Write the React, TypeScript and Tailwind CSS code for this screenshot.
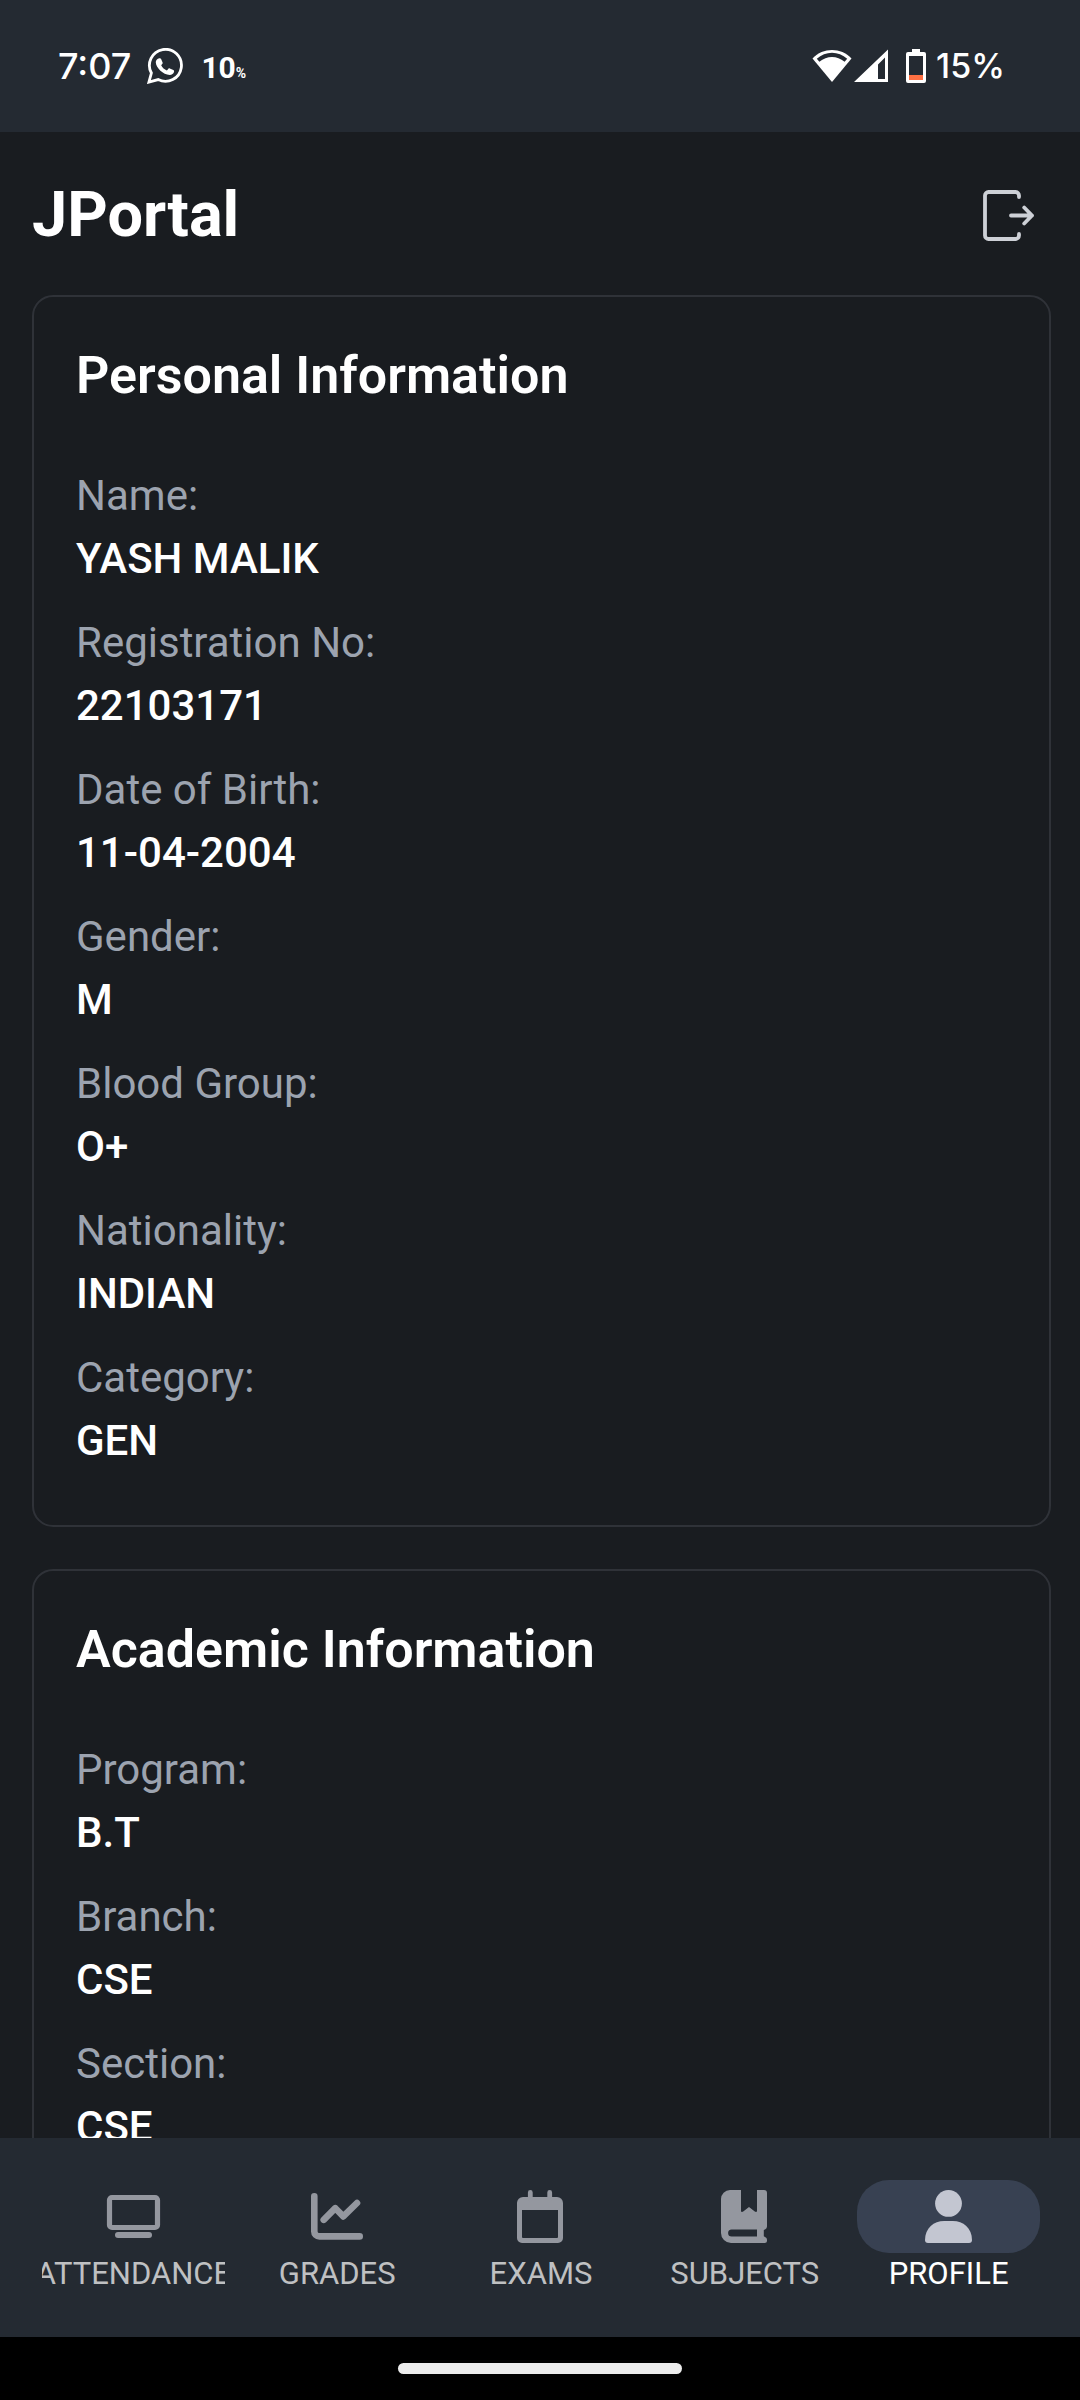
import React from "react";

type Field = { label: string; value: string };

const personal: Field[] = [
  { label: "Name:", value: "YASH MALIK" },
  { label: "Registration No:", value: "22103171" },
  { label: "Date of Birth:", value: "11-04-2004" },
  { label: "Gender:", value: "M" },
  { label: "Blood Group:", value: "O+" },
  { label: "Nationality:", value: "INDIAN" },
  { label: "Category:", value: "GEN" },
];

const academic: Field[] = [
  { label: "Program:", value: "B.T" },
  { label: "Branch:", value: "CSE" },
  { label: "Section:", value: "CSE" },
];

function WhatsAppIcon() {
  return (
    <svg className="size-9" viewBox="0 0 36 36" fill="none" aria-hidden="true">
      <path d="M11.2 31.6A16 16 0 1 0 4.4 25L1.9 34.1Z" stroke="#fff" strokeWidth="2.8" />
      <path
        d="M12.4 10.2c.7-.2 1.4 0 1.700.7l1.500 3.500c.2.500.1 1-.2 1.400l-1.200 1.500c1.200 2.400 3.200 4.200 5.700 5.200l1.500-1.800c.3-.4.900-.5 1.400-.3l3.500 1.700c.6.3.9.8.8 1.400-.3 2.200-2.300 3.500-4.400 3.500-6.700-.4-13.400-6.900-13.900-12.500-.1-1.900 1.300-4 3.600-4.300z"
        fill="#fff"
      />
    </svg>
  );
}

function WifiIcon() {
  return (
    <svg className="h-[34px] w-10" viewBox="0 0 40 34" fill="none" aria-hidden="true">
      <path d="M.5 9.500C11-1.800 29-1.800 39.500 9.500L20 33Z" fill="#fff" />
      <path d="M4.800 9.800C13.500 1.800 26.500 1.800 35.200 9.800L32.600 12.800C25 6.400 15 6.400 7.400 12.800Z" fill="#242a32" />
    </svg>
  );
}

function SignalIcon() {
  return (
    <svg className="h-[34px] w-[34px]" viewBox="0 0 34 34" aria-hidden="true">
      <path d="M34 .5V33H0ZM31 8.500L24 15.500V30H31Z" fill="#fff" fillRule="evenodd" />
    </svg>
  );
}

function BatteryIcon() {
  return (
    <svg className="h-[34px] w-5" viewBox="0 0 20 34" aria-hidden="true">
      <path
        d="M6 0h8v3h4a2 2 0 0 1 2 2v27a2 2 0 0 1-2 2H2a2 2 0 0 1-2-2V5a2 2 0 0 1 2-2h4ZM3 7v24h14V7Z"
        fill="#fff"
        fillRule="evenodd"
      />
      <path d="M3 26h14v5H3Z" fill="#ff7043" />
    </svg>
  );
}

function LogoutIcon() {
  return (
    <svg
      className="size-[63px]"
      viewBox="0 0 63 63"
      fill="none"
      stroke="#cdd0d6"
      strokeWidth="3.800"
      strokeLinecap="round"
      strokeLinejoin="round"
      aria-hidden="true"
    >
      <path d="M42 13V11.500a3.500 3.500 0 0 0-3.500-3.500H11.500A3.500 3.500 0 0 0 8 11.500V51.500a3.500 3.500 0 0 0 3.500 3.500H38.500a3.500 3.500 0 0 0 3.500-3.500V50" />
      <path d="M34 31.500H55M47.200 23.500L55 31.500L47.200 39.500" />
    </svg>
  );
}

function AttendanceIcon() {
  return (
    <svg className="size-[63px]" viewBox="0 0 63 63" fill="none" stroke="currentColor" aria-hidden="true">
      <rect x="7.500" y="12.500" width="48" height="30" rx="2.500" strokeWidth="5.200" />
      <path d="M16 50H47" strokeWidth="6" strokeLinecap="round" />
    </svg>
  );
}

function GradesIcon() {
  return (
    <svg
      className="size-[63px]"
      viewBox="0 0 63 63"
      fill="none"
      stroke="currentColor"
      strokeWidth="6.600"
      strokeLinecap="round"
      strokeLinejoin="round"
      aria-hidden="true"
    >
      <path d="M8.300 11.300V46.400a5 5 0 0 0 5 5H53.700" />
      <path d="M17.700 34.800L29.300 23.200L37.300 31.400L51 18" />
    </svg>
  );
}

function ExamsIcon() {
  return (
    <svg className="size-[63px]" viewBox="0 0 63 63" fill="currentColor" aria-hidden="true">
      <path
        d="M14 12H48a6 6 0 0 1 6 6V53a5 5 0 0 1-5 5H13a5 5 0 0 1-5-5V18a6 6 0 0 1 6-6ZM13 25V52a1 1 0 0 0 1 1H48a1 1 0 0 0 1-1V25Z"
        fillRule="evenodd"
      />
      <path d="M21.300 7.400V14M40.700 7.400V14" stroke="currentColor" strokeWidth="4.800" strokeLinecap="round" />
    </svg>
  );
}

function SubjectsIcon() {
  return (
    <svg className="size-[63px]" viewBox="0 0 63 63" fill="currentColor" aria-hidden="true">
      <path
        d="M17 5H28V25.500c0 1.500 1 1.900 2.200 1L36 22l5.800 4.500c1.200.9 2.200.5 2.200-1V5H51a3 3 0 0 1 3 3V41.500a3 3 0 0 1-2 2.900l-1.200.6v6.300l1.200.6a3 3 0 0 1 2 2.800V55.500a2.500 2.500 0 0 1-2.500 2.500H18A10 10 0 0 1 8 48V14A9 9 0 0 1 17 5ZM18.600 44.500a3.500 3.500 0 0 0 0 7H44V44.500Z"
        fillRule="evenodd"
      />
    </svg>
  );
}

function ProfileIcon() {
  return (
    <svg className="size-[63px]" viewBox="0 0 63 63" fill="currentColor" aria-hidden="true">
      <circle cx="31.500" cy="18.400" r="13.400" />
      <path d="M8 55C8 43 17 36 27 36H36C46 36 55 43 55 55a3 3 0 0 1-3 3H11a3 3 0 0 1-3-3Z" />
    </svg>
  );
}

const tabs = [
  { name: "ATTENDANCE", Icon: AttendanceIcon },
  { name: "GRADES", Icon: GradesIcon },
  { name: "EXAMS", Icon: ExamsIcon },
  { name: "SUBJECTS", Icon: SubjectsIcon },
  { name: "PROFILE", Icon: ProfileIcon, active: true },
];

function InfoCard({ title, fields }: { title: string; fields: Field[] }) {
  return (
    <section className="rounded-[21px] border-2 border-[#2f3238] px-[42px] pt-[42px] pb-[53px]">
      <h2 className="mb-[52px] text-[52px] leading-[73px] font-semibold">{title}</h2>
      <dl className="flex flex-col gap-[21px] text-[42px] leading-[63px]">
        {fields.map((f) => (
          <div key={f.label}>
            <dt className="text-[#9ca3af]">{f.label}</dt>
            <dd className="font-medium">{f.value}</dd>
          </div>
        ))}
      </dl>
    </section>
  );
}

export default function App() {
  return (
    <div className="flex h-screen flex-col bg-[#191c20] font-['Roboto',sans-serif] text-white">
      <div className="flex h-[132px] shrink-0 items-center justify-between bg-[#242a32] pr-[75px] pl-[58px]">
        <div className="flex items-center">
          <span className="font-['Inter',sans-serif] text-[36px] leading-[42px] font-medium">7:07</span>
          <span className="ml-4">
            <WhatsAppIcon />
          </span>
          <span className="ml-[18px] flex items-baseline pt-1 font-bold">
            <span className="text-[30px] leading-[42px]">10</span>
            <span className="text-[14px]">%</span>
          </span>
        </div>
        <div className="flex items-center">
          <WifiIcon />
          <span className="ml-[2px]">
            <SignalIcon />
          </span>
          <span className="ml-[18px]">
            <BatteryIcon />
          </span>
          <span className="ml-[10px] font-['Inter',sans-serif] text-[34px] leading-[42px] font-medium">15%</span>
        </div>
      </div>

      <main className="min-h-0 flex-1 overflow-hidden">
        <header className="flex items-center justify-between pt-[41px] pr-10 pb-[38px] pl-8">
          <h1 className="text-[63px] leading-[84px] font-bold">JPortal</h1>
          <button type="button" aria-label="Log out">
            <LogoutIcon />
          </button>
        </header>
        <div className="flex flex-col gap-[42px] pr-[29px] pl-8">
          <InfoCard title="Personal Information" fields={personal} />
          <InfoCard title="Academic Information" fields={academic} />
        </div>
      </main>

      <nav className="flex shrink-0 gap-[21px] bg-[#242a32] py-[42px] pr-10 pl-[42px]">
        {tabs.map(({ name, Icon, active }) => (
          <a
            key={name}
            href={"#" + name.toLowerCase()}
            aria-current={active ? "page" : undefined}
            className={
              active
                ? "flex min-w-0 flex-1 flex-col items-center overflow-hidden text-white"
                : "flex min-w-0 flex-1 flex-col items-center overflow-hidden text-[#bfc0c2]"
            }
          >
            <span
              className={
                active
                  ? "flex w-full justify-center rounded-[32px] bg-[#384152] py-[5px] text-[#c3c6d1]"
                  : "flex w-full justify-center py-[5px] text-[#94979f]"
              }
            >
              <Icon />
            </span>
            <span className="text-[31px] leading-[42px]">{name}</span>
          </a>
        ))}
      </nav>

      <div className="flex h-[63px] shrink-0 items-center justify-center bg-black">
        <div className="h-[11px] w-[284px] rounded-full bg-[#ececec]" />
      </div>
    </div>
  );
}
